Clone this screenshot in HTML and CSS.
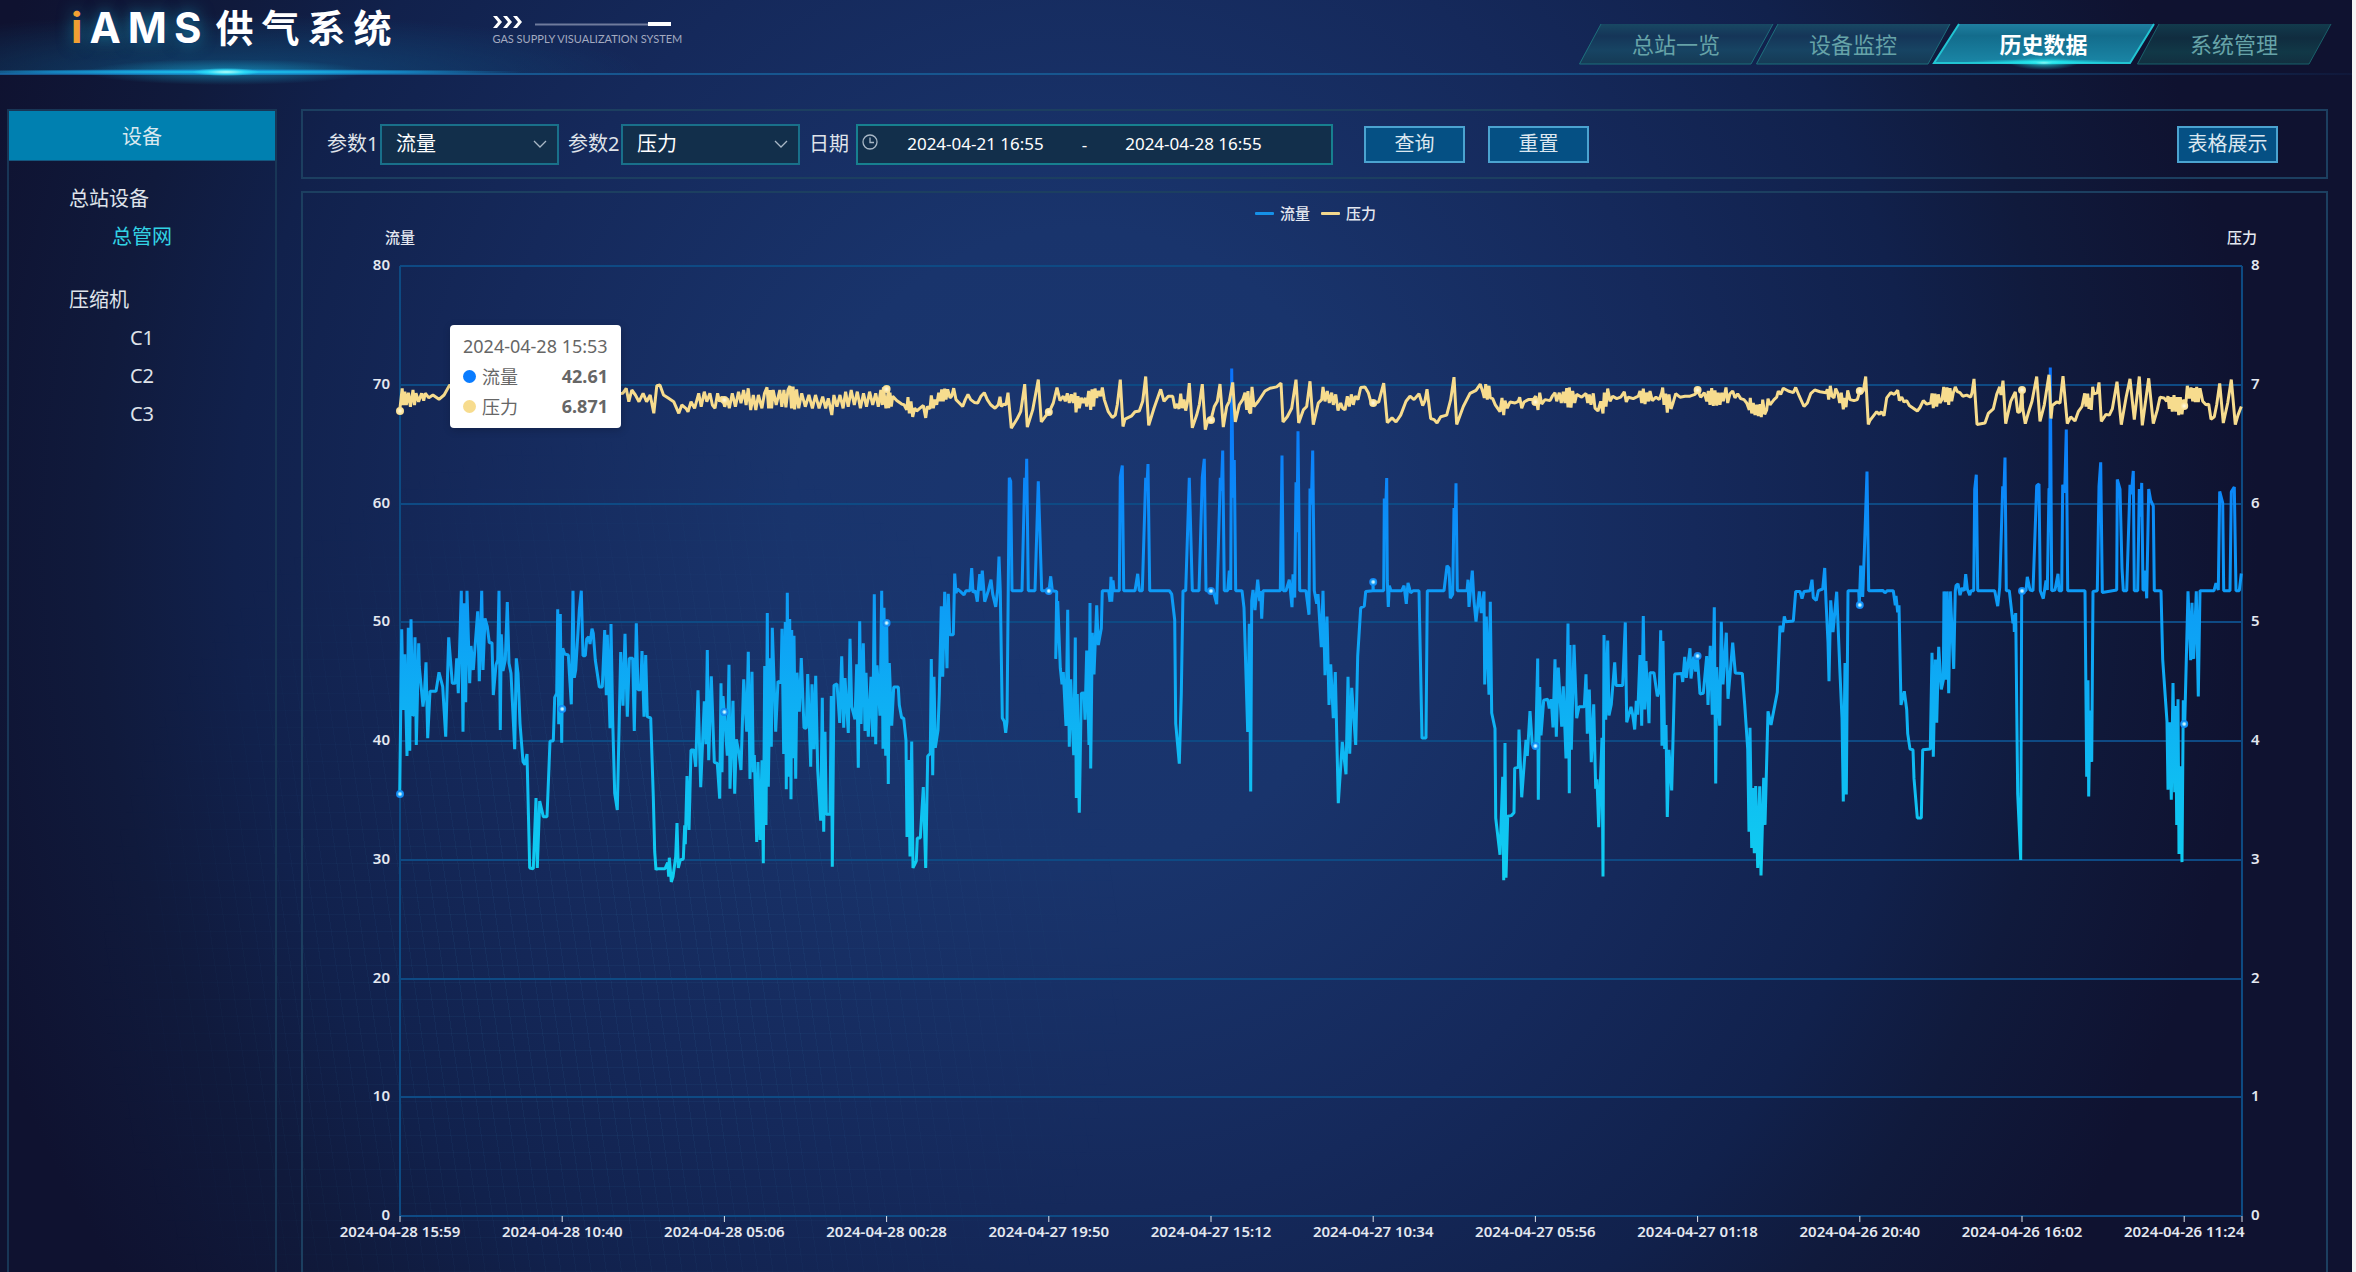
FILE: index.html
```html
<!DOCTYPE html>
<html lang="zh-CN">
<head>
<meta charset="utf-8">
<meta name="viewport" content="width=device-width, initial-scale=1">
<title>iAMS 供气系统 - 历史数据</title>
<link rel="stylesheet" href="styles.css">
</head>
<body>
<div class="page">
  <header class="topbar">
    <h1 class="brand"><span class="brand-latin"><span class="brand-i">i</span>AMS</span><span class="brand-cn">供气系统</span></h1>
    <div class="tagline">
      <svg class="tagline-art" viewBox="0 0 180 14" aria-hidden="true">
        <path d="M1 1h4l5 6-5 6H1l5-6zM11 1h4l5 6-5 6h-4l5-6zM21 1h4l5 6-5 6h-4l5-6z" fill="#fff"/>
        <path d="M43 8.500h113v2H43z" fill="#6f7b9c"/>
        <path d="M156 7h23v4h-23z" fill="#fff"/>
      </svg>
      <span class="tagline-text">GAS SUPPLY VISUALIZATION SYSTEM</span>
    </div>
    <nav class="tabs">
      <a class="tab" href="#overview"><svg class="tab-shape" viewBox="0 0 194 41" preserveAspectRatio="none" aria-hidden="true"><path d="M22 0H194L172 40H0z" fill="url(#tabFill)"/><path d="M22 0L.5 40H172L194 0" fill="none" stroke="#1d6e7c"/></svg><span>总站一览</span></a>
      <a class="tab" href="#monitor"><svg class="tab-shape" viewBox="0 0 194 41" preserveAspectRatio="none" aria-hidden="true"><path d="M22 0H194L172 40H0z" fill="url(#tabFill)"/><path d="M22 0L.5 40H172L194 0" fill="none" stroke="#1d6e7c"/></svg><span>设备监控</span></a>
      <a class="tab tab-active" href="#history"><svg class="tab-shape" viewBox="0 0 221 41" preserveAspectRatio="none" aria-hidden="true">
        <defs>
          <linearGradient id="tabFill" x1="0" y1="0" x2="0" y2="1"><stop offset="0" stop-color="#184863"/><stop offset=".3" stop-color="#153558"/><stop offset=".65" stop-color="#174463"/><stop offset="1" stop-color="#153a55"/></linearGradient>
          <linearGradient id="tabFillDark" x1="0" y1="0" x2="0" y2="1"><stop offset="0" stop-color="#123a4c"/><stop offset=".35" stop-color="#102c3f"/><stop offset=".7" stop-color="#113847"/><stop offset="1" stop-color="#122f40"/></linearGradient>
          <linearGradient id="tabOn" x1="0" y1="0" x2="0" y2="1"><stop offset="0" stop-color="#1f7fa0"/><stop offset=".3" stop-color="#136c8c"/><stop offset="1" stop-color="#1a86a6"/></linearGradient>
          <radialGradient id="tabGlow"><stop offset="0" stop-color="#b8fffa"/><stop offset=".25" stop-color="#25e8ee" stop-opacity=".9"/><stop offset="1" stop-color="#1cd0dc" stop-opacity="0"/></radialGradient>
        </defs>
        <path d="M26 0H221L197 39H1z" fill="url(#tabOn)"/>
        <path d="M26 0L1 39H197L221 0" fill="none" stroke="#22c4d2" stroke-width="2"/>
        <ellipse cx="111" cy="38" rx="80" ry="3" fill="url(#tabGlow)"/>
        <ellipse cx="111" cy="39" rx="34" ry="7" fill="url(#tabGlow)" opacity=".6"/>
      </svg><span>历史数据</span></a>
      <a class="tab" href="#system"><svg class="tab-shape" viewBox="0 0 194 41" preserveAspectRatio="none" aria-hidden="true"><path d="M22 0H194L172 40H0z" fill="url(#tabFillDark)"/><path d="M22 0L.5 40H172L194 0" fill="none" stroke="#19606a"/></svg><span>系统管理</span></a>
    </nav>
  </header>

  <div class="layout">
    <aside class="sidebar">
      <h2 class="sidebar-title">设备</h2>
      <section class="group">
        <h3 class="group-name">总站设备</h3>
        <a class="device device-on" href="#main">总管网</a>
      </section>
      <section class="group">
        <h3 class="group-name">压缩机</h3>
        <a class="device" href="#c1">C1</a>
        <a class="device" href="#c2">C2</a>
        <a class="device" href="#c3">C3</a>
      </section>
    </aside>

    <main class="content">
      <form class="filters" onsubmit="return false">
        <label class="field-label" for="p1">参数1</label>
        <span class="picker">
          <select id="p1" class="picker-select"><option>流量</option><option>压力</option></select>
          <svg class="chevron" viewBox="0 0 14 8" aria-hidden="true"><path d="M1 1l6 6 6-6" fill="none" stroke="#a9b8c6" stroke-width="1.300"/></svg>
        </span>
        <label class="field-label" for="p2">参数2</label>
        <span class="picker">
          <select id="p2" class="picker-select"><option>压力</option><option>流量</option></select>
          <svg class="chevron" viewBox="0 0 14 8" aria-hidden="true"><path d="M1 1l6 6 6-6" fill="none" stroke="#a9b8c6" stroke-width="1.300"/></svg>
        </span>
        <label class="field-label" for="from">日期</label>
        <span class="range">
          <svg class="clock" viewBox="0 0 16 16" aria-hidden="true"><circle cx="8" cy="8" r="7" fill="none" stroke="#a9b8c6" stroke-width="1.300"/><path d="M8 3.500V8.500H12" fill="none" stroke="#a9b8c6" stroke-width="1.300"/></svg>
          <input id="from" class="range-input" type="text" value="2024-04-21 16:55">
          <span class="range-sep">-</span>
          <input class="range-input" type="text" aria-label="结束日期" value="2024-04-28 16:55">
        </span>
        <button class="btn btn-query" type="submit">查询</button>
        <button class="btn" type="reset">重置</button>
        <button class="btn btn-table" type="button">表格展示</button>
      </form>

      <section class="chart">
        <div class="legend">
          <span class="legend-item"><i class="swatch swatch-flow"></i>流量</span>
          <span class="legend-item"><i class="swatch swatch-press"></i>压力</span>
        </div>
        <div class="axis-names"><span>流量</span><span>压力</span></div>
        <div class="plot">
          <svg id="plot" class="plot-svg" role="img" aria-label="流量与压力历史曲线"></svg>
          <div class="tip">
            <div class="tip-row">2024-04-28 15:53</div>
            <div class="tip-row"><i class="dot dot-flow"></i>流量<b class="tip-value">42.61</b></div>
            <div class="tip-row"><i class="dot dot-press"></i>压力<b class="tip-value">6.871</b></div>
          </div>
        </div>
      </section>
    </main>
  </div>
</div>
<script src="chart.js"></script>
</body>
</html>
```

FILE: styles.css
```css
* { box-sizing: border-box; }

body {
  margin: 0;
  background: #f4f4f4;
  color: #dfe3ea;
  font-family: "Noto Sans", "Noto Sans CJK SC", sans-serif;
  font-size: 20px;
}

h1, h2, h3 { margin: 0; font-weight: 400; }
a { text-decoration: none; color: inherit; }
input, select, button { font-family: inherit; color: inherit; }

.page {
  position: relative;
  display: flex;
  flex-direction: column;
  min-height: 100vh;
  margin-right: 4px;
  background: radial-gradient(ellipse 50% 100% at 46% 43%, #1a3670 0%, #19346c 25%, #15295b 52%, #11214c 72%, #101a3c 84%, #0f1230 100%);
  background-color: #0f1230;
  isolation: isolate;
}

.page::before {
  content: "";
  position: absolute;
  inset: 0;
  z-index: -1;
  background:
    repeating-linear-gradient(82deg, rgba(60, 140, 190, .08) 0 1px, transparent 1px 15px),
    repeating-linear-gradient(0deg, rgba(60, 140, 190, .08) 0 1px, transparent 1px 17px);
  -webkit-mask-image: radial-gradient(ellipse 22% 42% at 26% 76%, #000 30%, transparent 100%);
  mask-image: radial-gradient(ellipse 22% 42% at 26% 76%, #000 30%, transparent 100%);
}

/* Header */
.topbar {
  position: relative;
  display: flex;
  align-items: flex-start;
  height: 75px;
  padding: 0 21px 0 71px;
  border-bottom: 2px solid;
  border-image: linear-gradient(90deg, #17568f 60%, #143a66 85%, #10183a) 1;
  background: radial-gradient(ellipse 420px 60px at 226px 74px, rgba(15, 100, 150, .55), transparent);
}
.topbar::after {
  content: "";
  position: absolute;
  left: 0;
  top: 60px;
  width: 680px;
  height: 26px;
  background:
    radial-gradient(ellipse 34px 4px at 226px 12px, #b6fff8, rgba(48, 226, 250, .8) 55%, transparent),
    radial-gradient(ellipse 300px 3px at 226px 12px, #1fd0f5, rgba(22, 150, 215, .8) 60%, transparent),
    radial-gradient(ellipse 140px 13px at 226px 12px, rgba(25, 190, 230, .5), transparent);
}
.brand { display: flex; align-items: center; gap: 7px; height: 55px; font-weight: 700; color: #fff; }
.brand-latin {
  font-family: Inter, "Liberation Sans", sans-serif;
  font-size: 42px;
  line-height: 55px;
  letter-spacing: 7px;
  text-shadow: 0 0 2px #0b2a7a, 0 0 16px rgba(30, 190, 220, .6);
}
.brand-i { color: #f2a032; }
.brand-cn { font-size: 38px; line-height: 55px; letter-spacing: 8px; }
.tagline { display: flex; flex-direction: column; gap: 3px; margin: 15px 0 0 93px; width: 180px; }
.tagline-art { width: 180px; height: 14px; }
.tagline-text { font-family: "Liberation Sans Narrow", Lato, sans-serif; font-size: 11px; line-height: 14px; color: #a3aac0; white-space: nowrap; }

.tabs { display: flex; margin: 24px 0 0 auto; }
.tab {
  position: relative;
  display: flex;
  align-items: center;
  justify-content: center;
  width: 194px;
  height: 41px;
  margin-left: -17px;
  font-size: 22px;
  line-height: 32px;
  color: #66a3a8;
}
.tab span { margin-top: -2px; }
.tab-active { width: 221px; font-weight: 700; color: #fff; }
.tab-shape { position: absolute; inset: 0; width: 100%; height: 100%; z-index: -1; overflow: visible; }

/* Layout */
.layout { flex: 1; display: flex; gap: 24px; padding: 34px 24px 0 7px; }
.sidebar { flex: none; width: 270px; border: 2px solid #183656; border-bottom: 0; }
.sidebar-title {
  height: 50px;
  margin-bottom: 19px;
  border-bottom: 1px solid #15567e;
  background: #0080b0;
  color: #d8e8ef;
  font-size: 20px;
  line-height: 52px;
  text-align: center;
}
.group { display: flex; flex-direction: column; margin-bottom: 25px; }
.group-name { padding-left: 60px; font-size: 20px; line-height: 38px; }
.device { text-align: center; line-height: 38px; }
.device-on { color: #32d3e4; }

.content { flex: 1; min-width: 0; display: flex; flex-direction: column; gap: 12px; }

/* Filters */
.filters {
  display: flex;
  align-items: center;
  height: 70px;
  padding: 0 48px 0 24px;
  border: 2px solid #1c3f60;
}
.field-label { flex: none; width: 53px; line-height: 30px; white-space: nowrap; }
.picker { position: relative; margin-right: 9px; }
.picker-select {
  display: block;
  width: 179px;
  height: 41px;
  padding: 0 14px 2px;
  border: 2px solid #19708a;
  border-radius: 0;
  background: #122f4b;
  color: #fff;
  font-size: 20px;
  appearance: none;
}
.chevron { position: absolute; right: 12px; top: 16px; width: 14px; height: 8px; }
.range {
  display: flex;
  align-items: center;
  width: 477px;
  height: 41px;
  margin-left: -6px;
  padding-left: 4px;
  border: 2px solid #17808f;
  background: #122f4b;
  color: #fff;
}
.clock { flex: none; width: 16px; height: 16px; margin-top: -4px; }
.range-input {
  width: 195px;
  padding: 0;
  border: 0;
  background: none;
  font-size: 17px;
  line-height: 24px;
  text-align: center;
}
.range-sep { width: 23px; font-size: 17px; text-align: center; }
.btn {
  width: 101px;
  height: 37px;
  padding: 0;
  border: 2px solid #4ba3d0;
  background: #055084;
  color: #dbe7f0;
  font-size: 20px;
  line-height: 30px;
}
.btn-query { margin: 0 23px 0 31px; }
.btn-table { margin-left: auto; }

/* Chart */
.chart {
  flex: 1;
  display: flex;
  flex-direction: column;
  padding: 8px 84px 56px 97px;
  border: 2px solid #1c3f60;
  border-bottom: 0;
  font-size: 15px;
  font-weight: 500;
  color: #e4e8f0;
}
.legend { display: flex; justify-content: center; gap: 11px; height: 24px; margin-right: 11px; }
.legend-item { display: flex; align-items: center; gap: 6px; line-height: 22px; }
.swatch { width: 19px; height: 3px; border-radius: 1px; }
.swatch-flow { background: #1591e8; }
.swatch-press { background: #f2d78d; }
.axis-names { display: flex; justify-content: space-between; height: 41px; margin: 0 -15px; line-height: 24px; }
.plot { position: relative; flex: 1; display: flex; min-height: 400px; }
.plot-svg { flex: 1; min-width: 0; overflow: visible; }
.plot-svg text { fill: #e4e8f0; font-size: 15px; font-weight: 600; }

.tip {
  position: absolute;
  left: 50px;
  top: 59px;
  width: 171px;
  padding: 6px 13px 7px;
  border-radius: 4px;
  background: #fff;
  color: #666;
  font-size: 18px;
  font-weight: 400;
  box-shadow: 1px 2px 8px rgba(0, 0, 0, .2);
}
.tip-row { display: flex; align-items: center; height: 30px; white-space: nowrap; }
.tip-value { margin-left: auto; }
.dot { width: 13px; height: 13px; margin-right: 6px; border-radius: 50%; }
.dot-flow { background: #0a7cff; }
.dot-press { background: #f7dc8e; }
```

FILE: chart.js
```javascript
// Each block packs "x,y" samples with its own origin and resolution: [x0, y0, kx, ky, samples].
const FLOW = [
  [390, 540, 3, 3, "29,762 35,268 40,510 44,343 51,648 55,263 59,632 63,238 68,527 70,525 75,292 79,615 86,310 88,380 99,500 103,465 108,367 113,595 120,454 138,454 147,397 158,440 167,590 176,292 187,430 196,430 200,355 205,460 214,152 219,575 223,190 227,487 231,152 239,430 243,318 250,390 263,214 268,424 275,152 279,390 285,235 292,260 298,308 306,308 310,465 318,375 323,360 327,152 331,570 334,283 339,393 346,360 352,186 357,370 363,400 374,628 379,355 384,400 390,550 399,665 405,674 411,642 419,984 430,986 438,774 442,984 449,783 460,830 471,830 480,604 490,602 494,472 500,460 503,208 506,553 511,222 515,608 518,325 524,342 535,345 544,493 549,152 553,413 557,390 568,210 574,152 579,347 586,347 590,297 596,290 600,312 606,266 610,280 616,360 628,441 637,441 644,270 649,466 652,284 660,565 663,252 668,540 674,760 682,810 692,336 699,497 705,281 712,530 718,355 728,355 733,573 739,250 744,449 752,449 756,333 762,530 767,345 772,530 782,534 790,770 794,935 798,990 800,986 825,986 833,968 836,1010 838,953 844,1026 849,1010 857,950 861,849 865,984 871,960 880,957 884,856 886,913 891,708 897,870 903,630 911,630 917,680 924,451 932,742 943,484 948,613 952,330 956,661 964,409 973,667 982,670 989,776 993,430 996,697 999,468 1003,518 1012,647 1017,374 1020,746 1029,482 1034,761 1039,598 1047,640 1053,690 1061,418 1070,575 1075,335 1080,717 1086,395 1090,697 1093,645 1100,906 1104,666 1110,900 1116,661 1120,970 1124,378 1128,855 1132,219 1135,740 1141,355 1144,620 1147,263 1157,575 1164,424 1173,428 1176,266 1181,642 1186,246 1189,748 1192,158 1196,710 1199,237 1203,778 1205,270 1209,655 1212,287 1217,716 1221,398 1228,515 1234,354 1242,563 1249,565 1253,402 1262,680 1266,433 1272,628 1277,407 1283,690 1292,842 1297,473 1301,875 1305,575 1309,823 1320,823 1324,468 1327,980 1332,436 1341,432 1349,549 1355,349 1361,563 1365,414 1375,579 1380,296 1385,500 1395,538 1400,373 1405,683 1409,244 1413,552 1420,310 1425,573 1428,398 1435,590 1443,410 1448,590 1453,163 1457,613 1461,376 1470,527 1475,152 1479,626 1482,203 1487,647 1490,248 1495,732"],
  [880, 360, 3, 2.904, "25,1230 28,880 35,1062 41,950 55,950 58,1002 65,1040 71,1040 78,1105 81,1385 86,1162 90,1442 95,1108 99,1475 109,1455 112,1388 121,1388 130,1240 137,1475 143,1150 151,1143 154,868 158,1206 162,920 166,1126 174,1075 178,970 184,715 188,920 194,673 201,895 205,679 209,798 220,798 224,620 228,677 232,665 240,671 252,682 258,670 270,670 275,604 279,675 286,670 292,702 299,622 302,670 307,612 314,702 325,670 333,638 338,680 347,717 353,665 357,571 361,672 367,1040 373,1050 377,1083 381,1050 388,342 392,352 396,670 426,670 434,342 437,420 440,287 445,670 465,670 475,352 485,670 507,670 512,628 517,670 530,672 527,868 533,700 541,895 546,942 550,906 558,1063 563,725 568,1123 572,927 581,1148 586,806 589,1272 592,970 598,1315 604,968 612,967 615,1045 620,844 627,1118 630,706 632,1186 637,792 642,913 650,712 655,828 664,780 667,670 686,670 690,702 693,630 695,702 699,640 702,670 718,670 721,340 727,306 731,670 765,670 773,621 778,670 787,670 797,342 800,380 804,302 809,670 868,670 875,680 884,755 887,1055 898,1172 904,970 909,670 917,670 928,342 937,670 957,670 967,340 973,287 978,670 1000,670 1010,709 1021,342 1024,380 1028,263 1033,670 1043,670 1048,612 1052,668 1055,25 1059,400 1063,290 1067,670 1086,670 1092,720 1103,1080 1108,766 1112,1253 1115,700 1119,668 1125,726 1133,638 1139,700 1142,671 1145,751 1149,670 1201,670 1206,277 1210,670 1218,670 1228,638 1236,718 1239,622 1244,690 1248,355 1251,500 1254,207 1259,670 1278,670 1287,740 1290,373 1294,420 1298,263 1303,670 1310,708 1314,680 1324,834 1329,670 1335,915 1341,745 1347,1002 1352,884 1360,1040 1366,906 1375,1287 1387,1109 1398,1203 1404,920 1409,1143 1415,952 1427,1118 1433,860 1442,720 1453,715 1457,672 1478,670"],
  [1370, 360, 3, 2.904, "9,670 9,646 10,670 41,670 43,402 46,470 50,343 52,640 55,717 58,655 63,670 95,670 102,655 109,708 114,647 122,676 130,670 147,670 156,1098 168,1098 172,670 222,670 231,597 237,604 241,692 248,680 252,430 255,500 258,358 262,670 291,670 294,638 297,717 307,612 312,700 318,760 328,672 334,735 342,672 344,942 349,745 357,972 361,702 365,1025 375,1070 377,1330 390,1437 398,1210 401,1511 405,1112 408,1503 413,1325 424,1323 432,1315 434,1185 445,1183 447,1073 455,1270 468,1103 472,1150 480,1020 487,1118 497,1122 503,867 505,1277 509,950 513,1090 521,988 533,985 538,1012 544,985 549,1067 555,869 559,1094 565,893 575,1065 580,948 588,1157 594,765 598,1258 600,828 604,1132 612,827 620,1040 627,1007 643,1007 648,913 652,1085 658,957 664,1168 671,1000 677,1245 681,1218 686,1357 696,1097 699,1500 702,799 707,1045 713,815 717,1032 724,1000 734,878 738,945 758,945 766,762 770,1052 783,1007 788,1030 794,1073 799,990 803,1030 810,857 815,1062 820,743 824,1015 828,874 837,1055 840,908 852,908 862,977 868,962 872,785 876,1120 879,816 884,1130 888,1060 892,1327 897,1132 905,1250 914,912 935,910 938,935 944,862 949,923 960,837 963,925 971,862 977,905 982,860 990,970 1000,968 1010,860 1014,1002 1021,830 1027,1030 1033,718 1037,1230 1040,892 1049,1062 1054,760 1059,942 1069,792 1074,984 1083,880 1088,821 1096,909 1117,910 1124,1000 1133,1130 1137,1370 1140,1068 1145,1417 1149,1243 1153,1432 1157,1237 1163,1475 1169,1238 1173,1497 1181,1213 1185,1350 1194,1020 1203,1060 1222,965 1230,772 1238,790 1243,745 1247,760 1270,758 1277,672 1290,672 1296,693 1302,672 1320,670 1326,638 1330,690 1339,698 1345,670 1358,665 1364,604 1368,700 1374,820 1377,933 1382,698 1389,790 1400,673 1410,910 1416,1040 1420,1282 1425,880 1429,1262 1434,670 1466,670 1468,710 1472,597 1478,688 1483,560 1491,324 1496,670"],
  [1860, 360, 3, 2.904, "26,670 68,669 75,676 82,670 100,670 106,712 108,685 113,733 117,712 123,1002 133,962 140,1015 143,1085 150,1130 159,1132 162,1215 172,1330 184,1330 188,1132 211,1130 216,850 220,1152 226,870 230,1053 236,833 244,957 250,930 252,672 257,928 261,672 266,968 271,672 281,897 286,670 288,655 294,650 300,683 306,662 313,670 317,622 322,665 329,683 333,670 341,670 344,375 349,333 353,670 404,670 413,715 419,660 428,367 431,400 435,283 439,670 448,670 459,765 462,740 463,790 467,735 473,1260 482,1452 485,670 498,670 502,630 510,668 519,670 530,365 537,360 541,670 550,693 558,640 562,668 567,373 569,500 571,22 575,670 585,668 594,621 597,670 605,670 608,362 614,385 619,202 623,670 675,670 680,1210 684,930 686,1268 690,1018 695,1167 699,672 712,670 717,367 722,297 727,675 770,668 772,347 780,375 786,605 790,670 800,670 810,362 814,390 820,322 823,670 833,670 838,375 842,455 845,357 849,668 853,668 856,612 860,692 866,375 872,408 880,424 883,670 903,670 908,870 921,1050 924,1248 929,1052 934,1277 939,938 944,1255 947,1005 950,1350 954,985 957,1435 961,1180 966,1458 970,988 974,1058 984,672 992,872 996,705 1001,868 1009,672 1015,977 1020,670 1062,670 1068,648 1075,668 1079,382 1088,415 1091,670 1110,670 1114,383 1123,369 1128,670 1138,670 1144,620"]
];

const PRESSURE = [
  [290, 100, 1.96, 3, "215,932 220,865 222,915 225,875 228,915 232,878 236,920 241,870 244,915 247,880 252,905 258,880 262,902 265,880 272,893 280,885 292,898 302,885 313,855 340,890 370,875 400,900 430,880 470,895 520,880 570,900 620,885 652,880 659,865 664,905 670,870 677,885 684,905 692,880 699,905 706,885 713,940 719,857 725,855 732,885 742,895 752,905 762,940 768,915 776,925 780,935 786,905 793,925 801,880 806,920 812,875 817,905 823,880 828,915 833,925 838,880 842,905 847,890 852,920 857,895 861,925 867,880 873,920 879,875 884,910 889,870 894,915 898,865 903,930 908,885 913,930 918,885 925,925 930,880 935,862 938,925 941,870 944,925 947,870 953,915 960,870 964,920 968,870 972,922 976,870 980,858 983,925 986,860 989,928 993,868 997,925 1003,880 1010,920 1017,885 1024,925 1030,885 1037,925 1044,890 1050,925 1055,895 1062,945 1066,885 1072,920 1078,885 1084,925 1089,875 1094,920 1100,870 1106,915 1112,875 1118,925 1124,880 1130,920 1136,875 1142,915 1148,880 1153,920 1158,870 1161,915 1163,862 1168,925 1173,870"],
  [880, 360, 3, 2.904, "26,140 30,95 34,135 38,105 50,118 65,128 72,130 80,145 84,108 88,155 93,120 98,165 104,140 110,148 120,140 130,132 137,168 142,135 150,142 154,103 160,140 165,115 170,130 176,95 181,120 185,85 190,120 194,83 198,115 203,85 210,110 215,105 221,82 228,115 238,125 248,135 256,115 264,100 272,115 283,123 293,125 303,105 313,95 322,115 332,130 345,140 355,130 360,107 364,135 372,128 378,130 384,95 394,198 412,170 422,150 434,70 442,195 458,145 475,57 484,180 495,165 507,152 520,125 531,80 540,118 550,105 556,120 562,97 568,125 574,100 580,125 585,95 588,152 594,105 598,140 604,110 610,125 616,110 620,135 626,90 632,145 636,85 641,135 645,83 650,110 656,90 662,105 667,80 673,115 685,150 697,167 706,160 712,130 721,57 729,193 735,172 755,162 765,150 778,148 788,120 797,48 806,190 822,140 842,85 852,120 865,105 878,105 885,140 892,128 897,142 902,98 907,140 912,115 917,147 922,125 928,67 937,197 950,160 958,130 967,70 976,202 985,170 993,173 1003,135 1012,120 1020,70 1030,195 1040,135 1048,120 1058,65 1066,180 1078,130 1088,115 1095,95 1100,145 1104,90 1108,150 1112,155 1116,78 1122,135 1135,120 1155,90 1170,82 1190,78 1203,67 1209,180 1222,165 1235,140 1248,57 1256,183 1270,145 1280,135 1290,62 1300,188 1315,125 1325,115 1329,78 1335,120 1342,90 1348,125 1355,95 1360,130 1367,100 1374,147 1382,125 1388,140 1395,145 1402,105 1408,135 1414,100 1420,130 1426,105 1434,115 1442,80 1455,78 1465,95 1472,120 1478,127"],
  [1370, 360, 3, 2.904, "10,125 26,122 41,67 52,182 66,168 78,180 92,160 108,120 120,105 132,115 147,98 158,132 165,118 171,85 182,170 192,173 201,183 212,165 230,160 242,115 252,50 260,187 280,135 300,97 318,88 331,70 338,92 343,110 347,70 352,115 357,75 361,110 368,112 376,130 390,150 396,110 401,160 405,118 412,140 420,122 435,125 445,120 449,108 455,140 462,122 475,115 490,115 497,105 504,145 509,95 515,128 525,115 540,118 547,105 555,95 560,120 568,95 574,125 580,92 585,125 590,82 594,138 598,80 603,138 608,90 614,125 620,100 635,108 648,97 653,125 658,100 663,130 670,97 675,140 684,148 692,120 699,155 703,95 708,135 713,83 720,120 728,105 740,112 752,108 763,92 769,122 775,108 790,112 805,105 810,90 815,125 820,83 825,128 830,95 836,120 840,90 847,118 858,108 868,115 875,95 878,80 882,130 887,98 892,153 897,100 903,142 908,128 917,98 930,108 945,105 960,105 975,100 983,90 992,108 1003,95 1010,120 1015,90 1020,130 1025,82 1030,133 1035,88 1040,132 1045,95 1050,130 1055,95 1060,120 1068,80 1073,125 1080,98 1088,90 1095,110 1103,98 1112,112 1122,115 1130,125 1138,145 1141,110 1145,155 1150,125 1155,160 1160,130 1165,163 1170,128 1174,166 1178,115 1184,158 1190,145 1194,112 1200,130 1212,115 1220,108 1225,90 1232,100 1240,82 1255,90 1270,95 1277,80 1288,105 1302,135 1312,125 1322,98 1334,87 1350,92 1368,95 1372,85 1376,115 1381,75 1386,105 1392,110 1397,83 1404,98 1409,125 1414,95 1420,143 1424,110 1428,137 1433,88 1440,115 1452,118 1462,115 1469,92 1480,90 1487,48 1495,187"],
  [1860, 360, 3, 2.904, "30,175 50,150 58,158 64,150 72,162 80,110 92,95 103,100 113,88 118,118 125,108 132,122 140,118 148,132 160,140 172,148 180,138 190,118 200,128 212,125 216,97 220,140 225,98 230,135 235,100 240,125 246,115 251,78 256,122 261,80 266,130 270,82 275,120 280,95 286,78 292,92 300,95 308,105 320,102 332,108 336,95 342,55 351,187 375,183 385,155 400,142 410,100 419,78 423,102 429,60 437,185 452,120 466,93 473,152 480,150 486,88 488,140 496,185 506,150 516,120 530,48 540,178 553,130 567,43 573,170 577,132 590,122 600,125 609,47 622,185 632,165 645,177 655,150 666,135 674,97 678,135 683,98 687,142 690,110 694,145 698,78 702,98 712,95 717,65 724,178 738,158 748,160 757,142 771,63 784,188 798,110 810,55 823,173 838,48 847,190 866,53 880,185 892,145 900,108 912,110 920,120 924,105 928,142 932,108 937,150 942,102 947,150 952,108 956,160 961,108 966,158 971,115 977,132 982,75 988,112 993,80 998,120 1002,82 1006,122 1010,78 1015,122 1020,82 1028,120 1038,130 1046,128 1053,172 1063,165 1070,130 1079,68 1090,183 1103,125 1114,57 1126,188 1134,160 1144,135"]
];

const FLOW_MARKS = [794, 709, 712, 623, 591, 591, 582, 746, 656, 605, 591, 724];
const PRESSURE_MARKS = [411, 395, 400, 389, 412, 420, 403, 402, 390, 391, 390, 406];
const TIMES = ["2024-04-28 15:59", "2024-04-28 10:40", "2024-04-28 05:06", "2024-04-28 00:28", "2024-04-27 19:50", "2024-04-27 15:12", "2024-04-27 10:34", "2024-04-27 05:56", "2024-04-27 01:18", "2024-04-26 20:40", "2024-04-26 16:02", "2024-04-26 11:24"];

// Sample space covered by the axes.
const AREA = { x: 400, y: 266, w: 1842, h: 950 };
const svg = document.getElementById("plot");

function draw() {
  const { width, height } = svg.getBoundingClientRect();
  const px = x => ((x - AREA.x) / AREA.w * width).toFixed(1);
  const py = y => ((y - AREA.y) / AREA.h * height).toFixed(1);
  const line = blocks => "M" + blocks.map(([x0, y0, kx, ky, samples]) =>
    samples.split(" ").map(s => {
      const [x, y] = s.split(",").map(Number);
      return px(x0 + x / kx) + " " + py(y0 + y / ky);
    }).join("L")).join("L");

  let out = `<defs>
    <linearGradient id="flowInk" gradientUnits="userSpaceOnUse" x1="0" x2="0" y1="${py(368)}" y2="${py(881)}"><stop offset="0" stop-color="#0a72fb"/><stop offset="1" stop-color="#10cff0"/></linearGradient>
    <radialGradient id="flowDot"><stop offset="0" stop-color="#fff"/><stop offset=".35" stop-color="#8fdcff"/><stop offset=".6" stop-color="#1b9cf5"/><stop offset="1" stop-color="#0f7ff0"/></radialGradient>
    <radialGradient id="pressDot"><stop offset="0" stop-color="#fffbe8"/><stop offset=".6" stop-color="#fbe6a8"/><stop offset="1" stop-color="#f7dc8e"/></radialGradient>
  </defs>`;

  for (let i = 0; i <= 8; i++) {
    const y = Math.round(height * i / 8);
    out += `<path d="M0 ${y}H${width}" stroke="#0e4a84" stroke-width="2"/>`;
    out += `<text x="-10" y="${y + 4}" text-anchor="end">${80 - i * 10}</text>`;
    out += `<text x="${width + 9}" y="${y + 4}">${8 - i}</text>`;
  }
  out += `<path d="M0 0V${height}M${width} 0V${height}" stroke="#0d4a82" stroke-width="2"/>`;

  TIMES.forEach((t, i) => {
    const x = px(AREA.x + 162.2 * i);
    out += `<path d="M${x} ${height}v6" stroke="#dfe3ea" stroke-width="1"/>`;
    out += `<text x="${x}" y="${height + 21}" text-anchor="middle">${t}</text>`;
  });
  out += `<path d="M${width} ${height}v6" stroke="#dfe3ea" stroke-width="1"/>`;

  out += `<path d="${line(FLOW)}" fill="none" stroke="url(#flowInk)" stroke-width="3" stroke-linejoin="bevel"/>`;
  FLOW_MARKS.forEach((y, i) => {
    out += `<circle cx="${px(AREA.x + 162.2 * i)}" cy="${py(y)}" r="4" fill="url(#flowDot)"/>`;
  });
  out += `<path d="${line(PRESSURE)}" fill="none" stroke="#f7dc8e" stroke-width="3" stroke-linejoin="bevel"/>`;
  PRESSURE_MARKS.forEach((y, i) => {
    out += `<circle cx="${px(AREA.x + 162.2 * i)}" cy="${py(y)}" r="4" fill="url(#pressDot)"/>`;
  });
  svg.innerHTML = out;
}

draw();
addEventListener("resize", draw);
```
